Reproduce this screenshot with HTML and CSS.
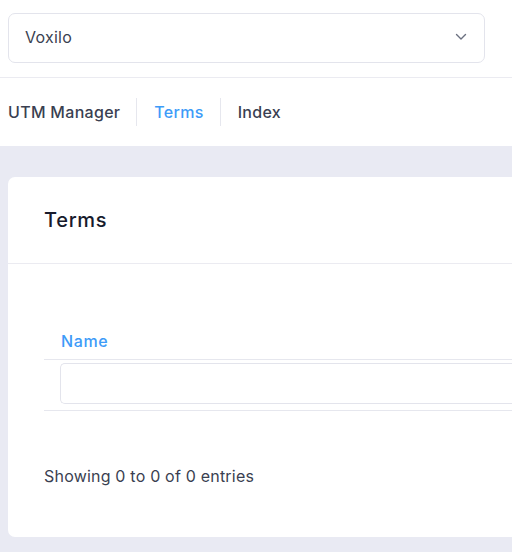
FILE: index.html
```html
<!DOCTYPE html>
<html>
<head>
<meta charset="utf-8">
<link rel="stylesheet" href="styles.css">
</head>
<body>
<header class="top">
  <div class="select-wrap">
    <div class="select">
      <span class="select-value">Voxilo</span>
      <svg class="chevron" width="12" height="8" viewBox="0 0 12 8"><path d="M1.5 1.5 L6 6 L10.5 1.5" fill="none" stroke="#6b7080" stroke-width="1.4" stroke-linecap="round" stroke-linejoin="round"/></svg>
    </div>
  </div>
  <nav class="tabs">
    <a class="tab">UTM Manager</a>
    <span class="sep"></span>
    <a class="tab active">Terms</a>
    <span class="sep"></span>
    <a class="tab">Index</a>
  </nav>
</header>
<main class="content">
  <section class="card">
    <div class="card-header">
      <h2 class="card-title">Terms</h2>
    </div>
    <div class="card-body">
      <table class="table">
        <thead>
          <tr class="head-row"><th>Name</th></tr>
          <tr class="filter-row"><td><div class="filter-input"></div></td></tr>
        </thead>
      </table>
      <div class="info">Showing 0 to 0 of 0 entries</div>
    </div>
  </section>
</main>
</body>
</html>
```
FILE: styles.css
```css
* { box-sizing: border-box; }
html, body { margin: 0; padding: 0; }
body {
  width: 512px;
  height: 552px;
  overflow: hidden;
  background: #e9eaf3;
  font-family: "Inter", "Open Sans", sans-serif;
  color: #3a3f51;
}
.top {
  background: #ffffff;
  height: 146px;
}
.select-wrap {
  padding: 13px 27px 0 8px;
  height: 78px;
  border-bottom: 1px solid #ebebf1;
}
.select {
  height: 50px;
  border: 1px solid #e3e4ec;
  border-radius: 7px;
  display: flex;
  align-items: center;
  justify-content: space-between;
  padding: 0 17px 2px 16px;
}
.select-value {
  font-size: 16px;
  letter-spacing: 0.25px;
  color: #3a3f51;
}
.chevron { display: block; }
.tabs {
  display: flex;
  align-items: center;
  height: 67px;
  padding-left: 8px;
}
.tab {
  font-size: 16px;
  font-weight: 500;
  letter-spacing: 0.3px;
  color: #3a3f51;
}
.tab.active { color: #3d9bf8; }
.sep {
  width: 1px;
  height: 28px;
  background: #e6e7ee;
  margin: 0 17px 0 16px;
}
.content {
  padding: 31px 0 0 8px;
}
.card {
  background: #fff;
  border-radius: 7px 0 0 7px;
  height: 360px;
}
.card-header {
  height: 87px;
  border-bottom: 1px solid #ebebf1;
  display: flex;
  align-items: center;
  padding-left: 36px;
}
.card-title {
  margin: 0;
  font-size: 20px;
  font-weight: 500;
  letter-spacing: 0.7px;
  color: #181b2c;
}
.card-body {
  padding: 63px 0 0 36px;
}
.table {
  width: 100%;
  border-collapse: collapse;
}
.head-row th {
  text-align: left;
  font-size: 16px;
  font-weight: 500;
  letter-spacing: 0.6px;
  color: #3d9bf8;
  padding: 0 0 8px 17px;
  border-bottom: 1px solid #e6e7ee;
  height: 32px;
  vertical-align: bottom;
}
.filter-row td {
  padding: 3px 0 6px 16px;
  border-bottom: 1px solid #e6e7ee;
}
.filter-input {
  height: 41px;
  border: 1px solid #e3e4ec;
  border-right: none;
  border-radius: 5px 0 0 5px;
}
.info {
  margin-top: 55px;
  font-size: 16px;
  letter-spacing: 0.2px;
  color: #3a3f51;
}
```
